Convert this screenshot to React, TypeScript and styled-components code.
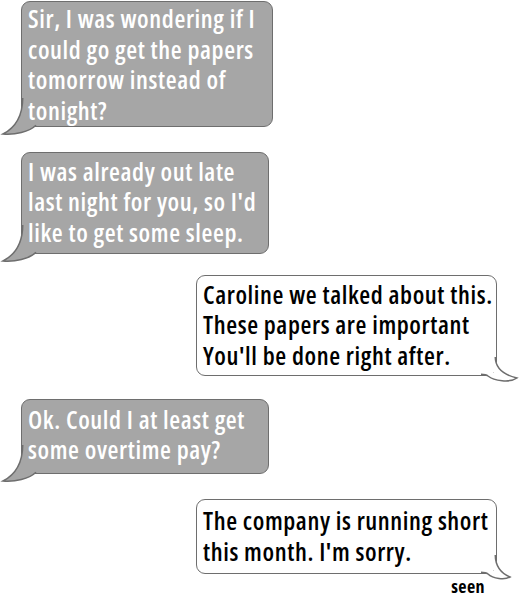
import React from "react";
import styled, { createGlobalStyle } from "styled-components";

const GlobalStyle = createGlobalStyle`
  html, body { margin: 0; padding: 0; background: #ffffff; }
  body { width: 519px; height: 601px; overflow: hidden; }
`;

const Thread = styled.div`
  display: flex;
  flex-direction: column;
  padding-top: 1px;
`;

type Side = "left" | "right";
type TailSize = "large" | "small";

const Message = styled.div<{ $side: Side; $mt: number }>`
  display: flex;
  flex-direction: column;
  align-items: flex-end;
  align-self: flex-start;
  margin-top: ${(p) => p.$mt}px;
  margin-left: ${(p) => (p.$side === "left" ? 21 : 196)}px;
`;

const Bubble = styled.div<{ $side: Side; $w: number; $pt: number; $pb: number }>`
  position: relative;
  box-sizing: border-box;
  width: ${(p) => p.$w}px;
  padding: ${(p) => p.$pt}px 4px ${(p) => p.$pb}px 6px;
  border: 1.5px solid #6e6e6e;
  border-radius: 9px;
  background: ${(p) => (p.$side === "left" ? "#a6a6a6" : "#ffffff")};
  color: ${(p) => (p.$side === "left" ? "#ffffff" : "#000000")};
  font-family: "Open Sans", "DejaVu Sans", sans-serif;
  font-stretch: 75%;
  font-weight: 600;
  font-size: 25px;
  line-height: 30.5px;
  letter-spacing: 0.6px;
  white-space: nowrap;
`;

const Line = styled.div``;

const TailSvg = styled.svg<{ $side: Side }>`
  position: absolute;
  overflow: visible;
  ${(p) =>
    p.$side === "left"
      ? `left: -22px; bottom: -12px; width: 40px; height: 44px;`
      : `right: -24px; bottom: -10px; width: 40px; height: 40px;`}
`;

const Seen = styled.div`
  margin-top: 3px;
  margin-right: 12px;
  font-family: "Open Sans", "DejaVu Sans", sans-serif;
  font-stretch: 75%;
  font-weight: 700;
  font-size: 18px;
  line-height: 18px;
  letter-spacing: 0.4px;
  color: #000000;
`;

const rightTails: Record<TailSize, string> = {
  large: "M15.25 12 Q15.5 28 37 33 C30 38 14 36 8 31 Q6 29.25 1 29.25",
  small: "M15.25 12 Q15.5 28 30 34 C25 37 13 36 8 31 Q6 29.25 1 29.25",
};

function Tail({ side, size }: { side: Side; size: TailSize }) {
  if (side === "left") {
    return (
      <TailSvg $side="left" viewBox="0 0 40 44">
        <path
          d="M24 3 L22.75 3 Q22.5 30 3 40 C15 41 29 38 36 31.25 L36 29 L24 29 Z"
          fill="#a6a6a6"
        />
        <path
          d="M22.75 4 Q22.5 30 3 40 C15 41 29 38 36 31.25"
          fill="none"
          stroke="#6e6e6e"
          strokeWidth="1.5"
        />
      </TailSvg>
    );
  }
  const d = rightTails[size];
  return (
    <TailSvg $side="right" viewBox="0 0 40 40">
      <path d={`M14 11 L15.25 11 ${d.slice(d.indexOf("Q"))} L1 28 L14 28 Z`} fill="#ffffff" />
      <path d={d} fill="none" stroke="#6e6e6e" strokeWidth="1.5" />
    </TailSvg>
  );
}

type Msg = {
  side: Side;
  lines: string[];
  w: number;
  pt: number;
  pb: number;
  mt: number;
  tail?: TailSize;
  seen?: boolean;
};

const messages: Msg[] = [
  {
    side: "left",
    lines: ["Sir, I was wondering if I", "could go get the papers", "tomorrow instead of", "tonight?"],
    w: 252,
    pt: 1,
    pb: 0.5,
    mt: 0,
  },
  {
    side: "left",
    lines: ["I was already out late", "last night for you, so I'd", "like to get some sleep."],
    w: 248,
    pt: 3,
    pb: 5.5,
    mt: 25,
  },
  {
    side: "right",
    lines: ["Caroline we talked about this.", "These papers are important", "You'll be done right after."],
    w: 301,
    pt: 3,
    pb: 4.5,
    mt: 21,
  },
  {
    side: "left",
    lines: ["Ok. Could I at least get", "some overtime pay?"],
    w: 248,
    pt: 4,
    pb: 8,
    mt: 23,
  },
  {
    side: "right",
    lines: ["The company is running short", "this month. I'm sorry."],
    w: 301,
    pt: 5,
    pb: 7,
    mt: 25.5,
    tail: "small",
    seen: true,
  },
];

export default function App() {
  return (
    <>
      <GlobalStyle />
      <Thread>
        {messages.map((m, i) => (
          <Message key={i} $side={m.side} $mt={m.mt}>
            <Bubble $side={m.side} $w={m.w} $pt={m.pt} $pb={m.pb}>
              {m.lines.map((l, j) => (
                <Line key={j}>{l}</Line>
              ))}
              <Tail side={m.side} size={m.tail ?? "large"} />
            </Bubble>
            {m.seen && <Seen>seen</Seen>}
          </Message>
        ))}
      </Thread>
    </>
  );
}
